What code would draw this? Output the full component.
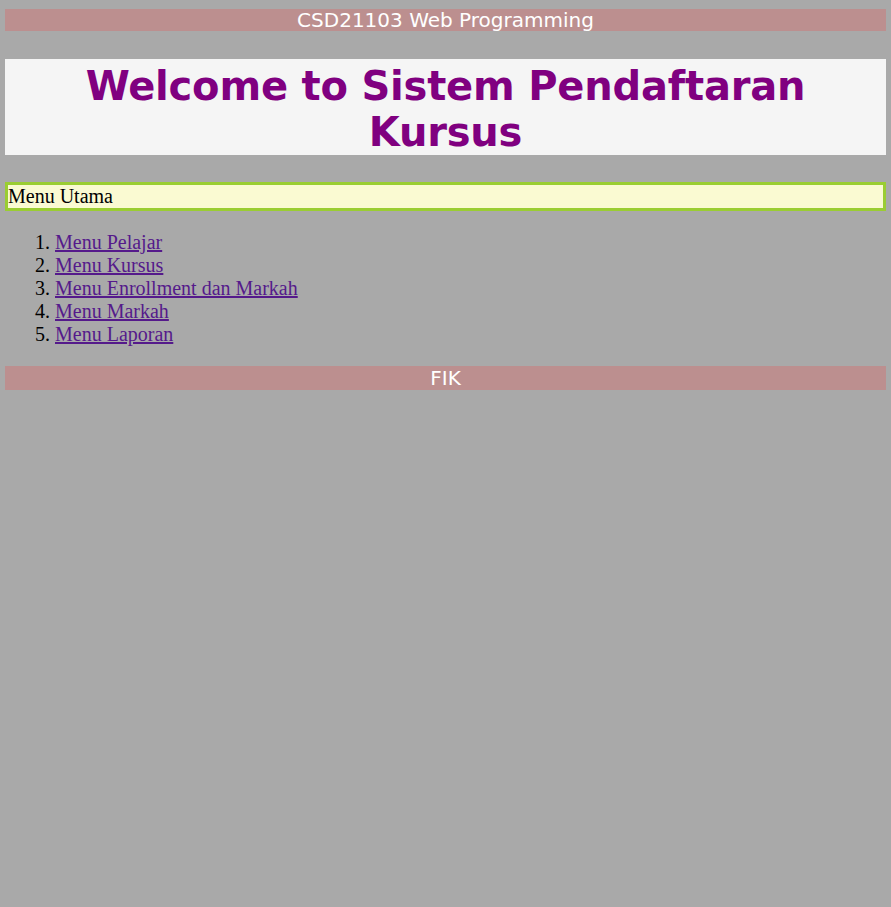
export default function App() {
  const menus = [
    'Menu Pelajar',
    'Menu Kursus',
    'Menu Enrollment dan Markah',
    'Menu Markah',
    'Menu Laporan',
  ];

  return (
    <div className="min-h-[907px] w-full bg-[#a9a9a9] px-[5px] pt-[9px]">
      <div className="bg-[#bc8f8f] text-center font-['DejaVu_Sans',Verdana,sans-serif] text-[20px] leading-[22px] text-white">
        CSD21103 Web Programming
      </div>

      <div className="mt-[28px] bg-[#f5f5f5] px-[60px] pt-[4px] text-center font-['DejaVu_Sans',Verdana,sans-serif] text-[40px] font-bold leading-[46px] tracking-[-0.2px] text-[#800080]">
        Welcome to Sistem Pendaftaran Kursus
      </div>

      <div className="mt-[27px] border-[3px] border-[#9acd32] bg-[#fafad2] font-['Liberation_Serif','Times_New_Roman',serif] text-[20px] leading-[23px] text-black">
        Menu Utama
      </div>

      <ol className="mt-[20px] list-decimal pl-[50px] font-['Liberation_Serif','Times_New_Roman',serif] text-[20px] leading-[23px] text-black">
        {menus.map((m) => (
          <li key={m}>
            <a href="#" className="text-[#551a8b] underline">
              {m}
            </a>
          </li>
        ))}
      </ol>

      <div className="mt-[20px] bg-[#bc8f8f] text-center font-['DejaVu_Sans',Verdana,sans-serif] text-[20px] leading-[24px] text-white">
        FIK
      </div>
    </div>
  );
}
